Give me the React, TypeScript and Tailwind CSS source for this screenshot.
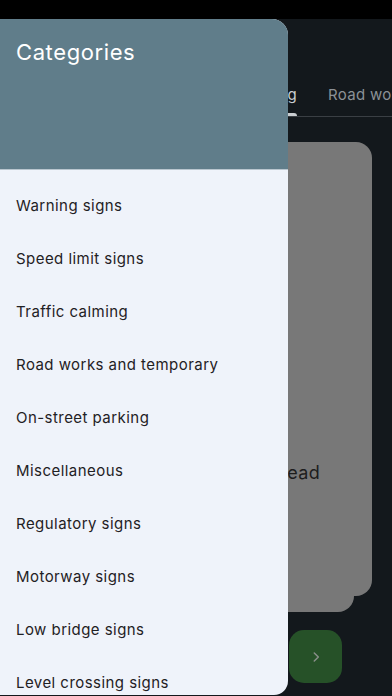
import React from "react";

const categories = [
  "Warning signs",
  "Speed limit signs",
  "Traffic calming",
  "Road works and temporary",
  "On-street parking",
  "Miscellaneous",
  "Regulatory signs",
  "Motorway signs",
  "Low bridge signs",
  "Level crossing signs",
];

const App = () => {
  return (
    <div
      className="relative w-[392px] h-[696px] overflow-hidden bg-black flex flex-col"
      style={{ fontFamily: "Inter, 'Noto Sans', sans-serif" }}
    >
      <div className="h-[19px] bg-black shrink-0" />

      {/* page behind the drawer */}
      <div className="flex-1 bg-[#13181c] flex flex-col">
        <div className="h-[56px]" />
        <div className="relative flex whitespace-nowrap overflow-hidden text-[15px] tracking-[0.3px] border-b border-[#3a3f44]">
          <div className="relative w-[313px] shrink-0 h-[41px] flex items-center justify-end pr-4 text-[#c9cdd0]">
            Traffic calming
            <span className="absolute right-4 bottom-0 w-[110px] h-[3px] rounded-t bg-[#c9cdd0]" />
          </div>
          <div className="h-[41px] flex items-center pl-[15px] text-[#8b9196]">
            Road works
          </div>
        </div>

        <div className="relative mt-[25px] mx-5 h-[470px]">
          <div className="absolute left-[12px] right-[18px] top-[20px] bottom-0 rounded-[16px] bg-[#787878]" />
          <div className="absolute inset-x-0 top-0 bottom-[16px] rounded-[16px] bg-[#787878] flex items-start justify-end pr-[52px] pt-[318px]">
            <span className="text-[18px] leading-[26px] text-[#1d1d1d] tracking-[0.3px]">Ahead</span>
          </div>
        </div>

        <div className="mt-[18px] ml-[289px] w-[53px] h-[53px] rounded-[15px] bg-[#265128] flex items-center justify-center">
          <svg width="14" height="14" viewBox="0 0 24 24" fill="none" stroke="#8a8f8a" strokeWidth="2.5" strokeLinecap="round" strokeLinejoin="round">
            <path d="M9 5l7 7-7 7" />
          </svg>
        </div>
      </div>

      {/* drawer */}
      <div className="absolute left-0 top-[19px] w-[288px] h-[676px] rounded-tr-[16px] rounded-br-[14px] overflow-hidden bg-[#eff3fa] flex flex-col">
        <div className="h-[151px] bg-[#607d8a] border-b border-[#b9c6cf] px-4 pt-[18px] shrink-0">
          <div className="text-[22px] text-white tracking-[0.6px] leading-[30px]">Categories</div>
        </div>
        <div className="pt-[10px] flex flex-col">
          {categories.map((c) => (
            <div
              key={c}
              className="h-[53px] px-4 flex items-center text-[15px] text-[#1f2124] tracking-[0.45px]"
            >
              {c}
            </div>
          ))}
        </div>
      </div>
    </div>
  );
};

export default App;
